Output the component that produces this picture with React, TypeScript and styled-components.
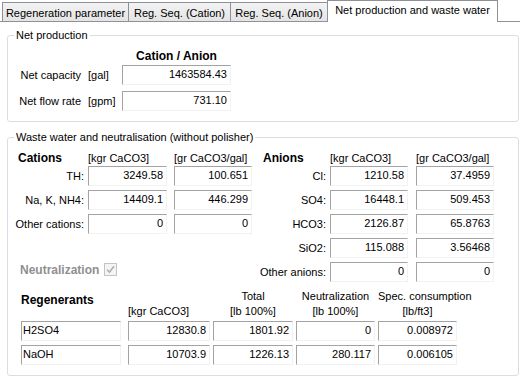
import { Fragment } from "react";
import styled, { createGlobalStyle } from "styled-components";

const GlobalStyle = createGlobalStyle`
    html, body {
        margin: 0;
        padding: 0;
        background: #fff;
        overflow: hidden;
    }
    body {
        font-family: "Liberation Sans", Arial, sans-serif;
        font-size: 11px;
        color: #000;
    }
`;

const Window = styled.div`
    width: 520px;
    height: 382px;
    display: flex;
    flex-direction: column;
    background: #fff;
`;

const TabStrip = styled.div`
    box-sizing: border-box;
    height: 22px;
    display: flex;
    align-items: flex-end;
    padding-left: 2px;
    border-bottom: 1px solid #8e9199;
    flex-shrink: 0;
`;

const Tab = styled.div<{ $active?: boolean; $w: number }>`
    box-sizing: border-box;
    width: ${(p) => p.$w}px;
    height: ${(p) => (p.$active ? 22 : 19)}px;
    margin-right: -1px;
    margin-bottom: ${(p) => (p.$active ? -1 : 0)}px;
    border: 1px solid #8e9199;
    border-bottom: none;
    background: ${(p) => (p.$active ? "#fff" : "linear-gradient(#f3f3f3, #e4e4e4)")};
    text-align: center;
    line-height: ${(p) => (p.$active ? 19 : 18)}px;
    padding-top: ${(p) => (p.$active ? 0 : 1)}px;
    white-space: nowrap;
    z-index: ${(p) => (p.$active ? 1 : 0)};
    position: relative;
`;

const Group = styled.fieldset<{ $top: number }>`
    margin: ${(p) => p.$top}px 1px 0 7px;
    padding: 7px 0 10px 0;
    border: 1px solid #d5dfe5;
    border-radius: 3px;
    min-width: 0;
`;

const Legend = styled.legend`
    margin-left: 6px;
    padding: 0 2px;
    line-height: 14px;
`;

const NetGrid = styled.div`
    display: grid;
    grid-template-columns: 71px 27px 109px;
    grid-template-rows: 16px 26px 20px;
    column-gap: 7px;
    align-items: start;
    padding-left: 2px;
`;

const Bold = styled.div<{ $indent?: number; $top?: number; $center?: boolean }>`
    font-weight: bold;
    font-size: 12px;
    line-height: 15px;
    padding-left: ${(p) => p.$indent ?? 0}px;
    padding-top: ${(p) => p.$top ?? 0}px;
    text-align: ${(p) => (p.$center ? "center" : "left")};
    white-space: nowrap;
`;

const Label = styled.div<{ $right?: boolean }>`
    line-height: 20px;
    text-align: ${(p) => (p.$right ? "right" : "left")};
    white-space: nowrap;
`;

const ColHead = styled.div`
    line-height: 15px;
    white-space: nowrap;
`;

const Field = styled.div<{ $left?: boolean; $w?: number }>`
    box-sizing: border-box;
    width: ${(p) => (p.$w ? `${p.$w}px` : "100%")};
    height: 20px;
    border-top: 1px solid #a3a3a3;
    border-left: 1px solid #a3a3a3;
    border-right: 1px solid #f2f2f2;
    border-bottom: 1px solid #f2f2f2;
    background: #fff;
    line-height: 16px;
    padding: 0 ${(p) => (p.$left ? 0 : 3)}px 0 ${(p) => (p.$left ? 1 : 0)}px;
    text-align: ${(p) => (p.$left ? "left" : "right")};
    white-space: nowrap;
    overflow: hidden;
`;

const Upper = styled.div`
    display: flex;
    gap: 3px;
    padding-left: 5px;
`;

const IonGrid = styled.div`
    display: grid;
    grid-template-columns: 71px 82px 78px;
    grid-template-rows: 15px repeat(5, 24px);
    column-gap: 4px;
    align-items: start;
`;

const NeutralRow = styled.div`
    grid-column: 1 / span 3;
    grid-row: 6;
    display: flex;
    align-items: center;
    gap: 5px;
    padding-left: 7px;
    height: 15px;
`;

const DisabledBold = styled.span`
    font-weight: bold;
    font-size: 12px;
    color: #8f8f8f;
`;

const CheckBox = styled.span`
    box-sizing: border-box;
    width: 13px;
    height: 13px;
    border: 1px solid #c4c4c4;
    background: #f4f4f4;
    display: flex;
    align-items: center;
    justify-content: center;
`;

const RegenGrid = styled.div`
    display: grid;
    grid-template-columns: 104px 82px 80px 79px 79px;
    grid-template-rows: 32px 24px 20px;
    column-gap: 3px;
    align-items: start;
    margin-top: 3px;
    padding-left: 13px;
`;

const RegenHead = styled.div<{ $left?: boolean }>`
    line-height: 15px;
    text-align: ${(p) => (p.$left ? "left" : "center")};
    white-space: nowrap;
    align-self: ${(p) => (p.$left ? "end" : "start")};
    padding-bottom: ${(p) => (p.$left ? 2 : 0)}px;
`;

const cations = [
    { name: "TH:", kgr: "3249.58", gr: "100.651" },
    { name: "Na, K, NH4:", kgr: "14409.1", gr: "446.299" },
    { name: "Other cations:", kgr: "0", gr: "0" },
];

const anions = [
    { name: "Cl:", kgr: "1210.58", gr: "37.4959" },
    { name: "SO4:", kgr: "16448.1", gr: "509.453" },
    { name: "HCO3:", kgr: "2126.87", gr: "65.8763" },
    { name: "SiO2:", kgr: "115.088", gr: "3.56468" },
    { name: "Other anions:", kgr: "0", gr: "0" },
];

const regenerants = [
    { name: "H2SO4", kgr: "12830.8", total: "1801.92", neut: "0", spec: "0.008972" },
    { name: "NaOH", kgr: "10703.9", total: "1226.13", neut: "280.117", spec: "0.006105" },
];

export default function App() {
    return (
        <Window>
            <GlobalStyle />
            <TabStrip>
                <Tab $w={127}>Regeneration parameter</Tab>
                <Tab $w={103}>Reg. Seq. (Cation)</Tab>
                <Tab $w={98}>Reg. Seq. (Anion)</Tab>
                <Tab $w={171} $active>Net production and waste water</Tab>
            </TabStrip>

            <Group $top={6}>
                <Legend>Net production</Legend>
                <NetGrid>
                    <div />
                    <div />
                    <Bold $center>Cation / Anion</Bold>
                    <Label $right>Net capacity</Label>
                    <Label>[gal]</Label>
                    <Field>1463584.43</Field>
                    <Label $right>Net flow rate</Label>
                    <Label>[gpm]</Label>
                    <Field>731.10</Field>
                </NetGrid>
            </Group>

            <Group $top={8}>
                <Legend>Waste water and neutralisation (without polisher)</Legend>
                <Upper>
                    <IonGrid>
                        <Bold $indent={5}>Cations</Bold>
                        <ColHead>[kgr CaCO3]</ColHead>
                        <ColHead>[gr CaCO3/gal]</ColHead>
                        {cations.map((c) => (
                            <Fragment key={c.name}>
                                <Label $right>{c.name}</Label>
                                <Field $w={79}>{c.kgr}</Field>
                                <Field>{c.gr}</Field>
                            </Fragment>
                        ))}
                        <NeutralRow>
                            <DisabledBold>Neutralization</DisabledBold>
                            <CheckBox>
                                <svg width="9" height="9" viewBox="0 0 9 9">
                                    <path d="M1 4.6 L3.4 7.2 L8 1.2" fill="none" stroke="#a8a8a8" strokeWidth="1.4" />
                                </svg>
                            </CheckBox>
                        </NeutralRow>
                    </IonGrid>
                    <IonGrid>
                        <Bold $indent={8}>Anions</Bold>
                        <ColHead>[kgr CaCO3]</ColHead>
                        <ColHead>[gr CaCO3/gal]</ColHead>
                        {anions.map((a) => (
                            <Fragment key={a.name}>
                                <Label $right>{a.name}</Label>
                                <Field $w={78}>{a.kgr}</Field>
                                <Field>{a.gr}</Field>
                            </Fragment>
                        ))}
                    </IonGrid>
                </Upper>

                <RegenGrid>
                    <Bold $top={4}>Regenerants</Bold>
                    <RegenHead $left>[kgr CaCO3]</RegenHead>
                    <RegenHead>Total<br />[lb 100%]</RegenHead>
                    <RegenHead>Neutralization<br />[lb 100%]</RegenHead>
                    <RegenHead>Spec. consumption<br />[lb/ft3]</RegenHead>
                    {regenerants.map((r) => (
                        <Fragment key={r.name}>
                            <Field $left $w={100}>{r.name}</Field>
                            <Field>{r.kgr}</Field>
                            <Field>{r.total}</Field>
                            <Field>{r.neut}</Field>
                            <Field>{r.spec}</Field>
                        </Fragment>
                    ))}
                </RegenGrid>
            </Group>
        </Window>
    );
}
